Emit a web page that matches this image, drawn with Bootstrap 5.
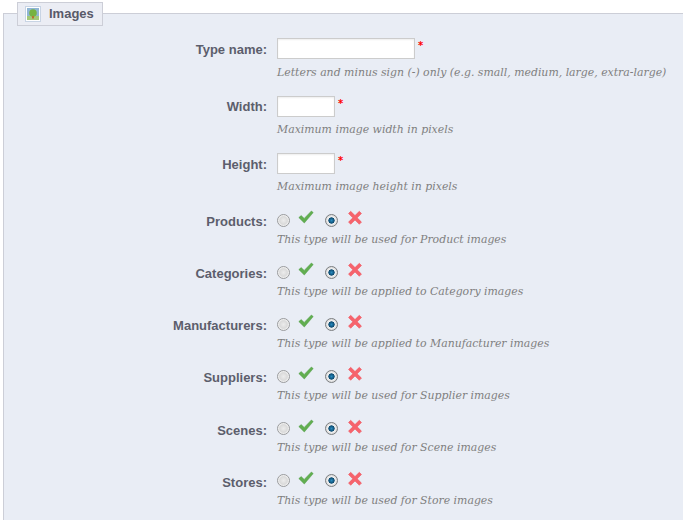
<!DOCTYPE html>
<html lang="en"><head><meta charset="utf-8"><title>Images</title>
<link href="https://cdn.jsdelivr.net/npm/bootstrap@5.3.0/dist/css/bootstrap.min.css" rel="stylesheet">
<style>
html,body{margin:0;background:#fff;overflow:hidden;height:520px}
body{font-family:"Liberation Sans",Arial,sans-serif;color:#585a69;padding:13px 0 0 3px}
.panel-box{width:680px;height:520px;background:#e9edf5;border:1px solid #ccced7;border-right:0;border-bottom:0;margin:0;padding:24px 0 0;position:relative;min-width:0}
.panel-legend{position:absolute;left:13px;top:-12px;width:86px;height:24px;float:none;margin:0;padding:0 0 0 7px;background:#ebedf4;border:1px solid #ccced7;font:bold 13px/22px "Liberation Sans",sans-serif;color:#585a69;gap:8px}
.panel-legend svg{width:16px;height:16px}
.field-label{width:263px;text-align:right;font:bold 13px/16px "Liberation Sans",sans-serif;color:#5c5e6c;flex:none}
.field-body{margin-left:10px}
.txt-input{display:block;height:21px;border:1px solid #ccc;background:#fff;padding:0;border-radius:0;box-shadow:inset 0 1px 2px #eee}
.w-long{width:138px}.w-short{width:58px}
.req{color:#f00;font:bold 10px/10px "DejaVu Sans",sans-serif;margin:3px 0 0 3px;height:12px}
.hint{font:italic 10.9px/14px "DejaVu Serif",serif;color:#7f7f7f;margin:0;white-space:nowrap}
.row-a{height:58px}.row-b{height:57px}
.row-a .field-label,.row-b .field-label{padding-top:4px}
.row-b .field-label.lbl-up{padding-top:3px}
.gap-a{margin-top:7px}.gap-b{margin-top:6px}
.row-radio{height:52.15px}
.row-radio .field-label{padding-top:3px}
.row-radio .hint{margin-top:3.8px}
.opts{height:18px}
.opts .form-check-input{appearance:none;width:13px;height:13px;margin:0;border-radius:50%;border:1px solid #9a9b9d;background:radial-gradient(circle closest-side,#ececec 0,#dadada 70%,#f6f6f6 100%);flex:none;float:none}
.opts .form-check-input:checked{background:radial-gradient(circle closest-side,#2a8cc0 0,#0c4a70 52%,#f2f2f2 62%,#dcdcdc 100%);border-color:#7b7e80}
.opts svg{width:16px;height:16px;flex:none;margin-top:-4px}
.opts .m-a{margin-left:8px}
.opts .m-b{margin-left:11px}
.opts .m-c{margin-left:9px}
</style></head>
<body>
<fieldset class="panel-box">
<legend class="panel-legend d-flex align-items-center">
<svg viewBox="0 0 16 16"><rect x=".5" y=".5" width="15" height="15" fill="#fff" stroke="#c8d4e4"/><rect x="2" y="2" width="12" height="12" fill="#8fb5d4"/><rect x="2" y="10" width="12" height="4" fill="#a3c878"/><circle cx="8" cy="7" r="3.8" fill="#76b340"/><rect x="7" y="10" width="2" height="2.500" fill="#b5752f"/></svg>
<span>Images</span></legend>

<div class="row-a d-flex">
<div class="field-label">Type name:</div>
<div class="field-body"><div class="d-flex"><input class="txt-input w-long" type="text"><span class="req">*</span></div><p class="hint gap-a">Letters and minus sign (-) only (e.g. small, medium, large, extra-large)</p></div>
</div>
<div class="row-b d-flex">
<div class="field-label lbl-up">Width:</div>
<div class="field-body"><div class="d-flex"><input class="txt-input w-short" type="text"><span class="req">*</span></div><p class="hint gap-b">Maximum image width in pixels</p></div>
</div>
<div class="row-a d-flex">
<div class="field-label">Height:</div>
<div class="field-body"><div class="d-flex"><input class="txt-input w-short" type="text"><span class="req">*</span></div><p class="hint gap-b">Maximum image height in pixels</p></div>
</div>

<div class="row-radio d-flex"><div class="field-label">Products:</div><div class="field-body"><div class="opts d-flex align-items-center"><input class="form-check-input" type="radio" name="r1"><svg class="m-a" viewBox="0 0 16 16"><path d="M.8 7.600l2.400-2 3 2.800L13.400 1l1.800 1.600L6.300 13z" fill="#62ae50" stroke="#4a9a42" stroke-width=".5"/></svg><input class="form-check-input m-b" type="radio" name="r1" checked><svg class="m-c" viewBox="0 0 16 16"><path d="M1.500 3.500L3.700 1.300 8 5.500l4.300-4.200 2.200 2.200L10.200 7.800l4.300 4.300-2.200 2.200L8 10 3.700 14.300 1.500 12.100 5.800 7.800z" fill="#f6636c" stroke="#ee4a55" stroke-width=".5"/></svg></div><p class="hint">This type will be used for Product images</p></div></div>
<div class="row-radio d-flex"><div class="field-label">Categories:</div><div class="field-body"><div class="opts d-flex align-items-center"><input class="form-check-input" type="radio" name="r2"><svg class="m-a" viewBox="0 0 16 16"><path d="M.8 7.600l2.400-2 3 2.800L13.400 1l1.800 1.600L6.300 13z" fill="#62ae50" stroke="#4a9a42" stroke-width=".5"/></svg><input class="form-check-input m-b" type="radio" name="r2" checked><svg class="m-c" viewBox="0 0 16 16"><path d="M1.500 3.500L3.700 1.300 8 5.500l4.300-4.200 2.200 2.200L10.200 7.800l4.300 4.300-2.200 2.200L8 10 3.700 14.300 1.500 12.100 5.800 7.800z" fill="#f6636c" stroke="#ee4a55" stroke-width=".5"/></svg></div><p class="hint">This type will be applied to Category images</p></div></div>
<div class="row-radio d-flex"><div class="field-label">Manufacturers:</div><div class="field-body"><div class="opts d-flex align-items-center"><input class="form-check-input" type="radio" name="r3"><svg class="m-a" viewBox="0 0 16 16"><path d="M.8 7.600l2.400-2 3 2.800L13.400 1l1.800 1.600L6.300 13z" fill="#62ae50" stroke="#4a9a42" stroke-width=".5"/></svg><input class="form-check-input m-b" type="radio" name="r3" checked><svg class="m-c" viewBox="0 0 16 16"><path d="M1.500 3.500L3.700 1.300 8 5.500l4.300-4.200 2.200 2.200L10.200 7.800l4.300 4.300-2.200 2.200L8 10 3.700 14.300 1.500 12.100 5.800 7.800z" fill="#f6636c" stroke="#ee4a55" stroke-width=".5"/></svg></div><p class="hint">This type will be applied to Manufacturer images</p></div></div>
<div class="row-radio d-flex"><div class="field-label">Suppliers:</div><div class="field-body"><div class="opts d-flex align-items-center"><input class="form-check-input" type="radio" name="r4"><svg class="m-a" viewBox="0 0 16 16"><path d="M.8 7.600l2.400-2 3 2.800L13.400 1l1.800 1.600L6.300 13z" fill="#62ae50" stroke="#4a9a42" stroke-width=".5"/></svg><input class="form-check-input m-b" type="radio" name="r4" checked><svg class="m-c" viewBox="0 0 16 16"><path d="M1.500 3.500L3.700 1.300 8 5.500l4.300-4.200 2.200 2.200L10.200 7.800l4.300 4.300-2.200 2.200L8 10 3.700 14.300 1.500 12.100 5.800 7.800z" fill="#f6636c" stroke="#ee4a55" stroke-width=".5"/></svg></div><p class="hint">This type will be used for Supplier images</p></div></div>
<div class="row-radio d-flex"><div class="field-label">Scenes:</div><div class="field-body"><div class="opts d-flex align-items-center"><input class="form-check-input" type="radio" name="r5"><svg class="m-a" viewBox="0 0 16 16"><path d="M.8 7.600l2.400-2 3 2.800L13.400 1l1.800 1.600L6.300 13z" fill="#62ae50" stroke="#4a9a42" stroke-width=".5"/></svg><input class="form-check-input m-b" type="radio" name="r5" checked><svg class="m-c" viewBox="0 0 16 16"><path d="M1.500 3.500L3.700 1.300 8 5.500l4.300-4.200 2.200 2.200L10.200 7.800l4.300 4.300-2.200 2.200L8 10 3.700 14.300 1.500 12.100 5.800 7.800z" fill="#f6636c" stroke="#ee4a55" stroke-width=".5"/></svg></div><p class="hint">This type will be used for Scene images</p></div></div>
<div class="row-radio d-flex"><div class="field-label">Stores:</div><div class="field-body"><div class="opts d-flex align-items-center"><input class="form-check-input" type="radio" name="r6"><svg class="m-a" viewBox="0 0 16 16"><path d="M.8 7.600l2.400-2 3 2.800L13.400 1l1.800 1.600L6.300 13z" fill="#62ae50" stroke="#4a9a42" stroke-width=".5"/></svg><input class="form-check-input m-b" type="radio" name="r6" checked><svg class="m-c" viewBox="0 0 16 16"><path d="M1.500 3.500L3.700 1.300 8 5.500l4.300-4.200 2.200 2.200L10.200 7.800l4.300 4.300-2.200 2.200L8 10 3.700 14.300 1.500 12.100 5.800 7.800z" fill="#f6636c" stroke="#ee4a55" stroke-width=".5"/></svg></div><p class="hint">This type will be used for Store images</p></div></div>
</fieldset>
</body></html>
